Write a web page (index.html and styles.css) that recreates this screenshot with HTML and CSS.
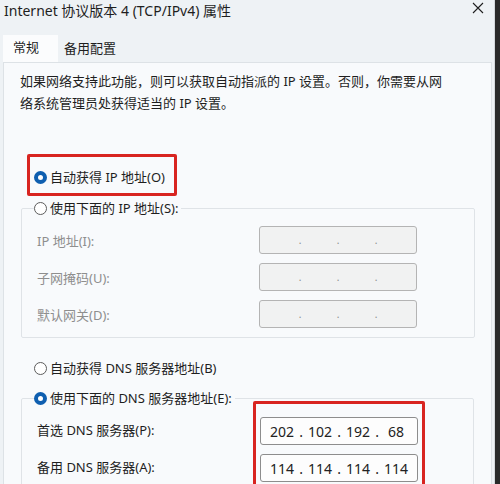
FILE: index.html
```html
<!DOCTYPE html>
<html lang="zh-CN">
<head>
<meta charset="UTF-8">
<title>Internet 协议版本 4 (TCP/IPv4) 属性</title>
<link rel="stylesheet" href="styles.css">
</head>
<body>
    <div class="window">
        <div class="titlebar">
            <span class="title">Internet 协议版本 4 (TCP/IPv4) 属性</span>
            <svg class="close" width="12" height="12" viewBox="0 0 12 12">
                <path d="M1 1 L11 11 M11 1 L1 11" stroke="#1f1f1f" stroke-width="1.1" fill="none"/>
            </svg>
        </div>
        <div class="tabs">
            <div class="tab active">常规</div>
            <div class="tab">备用配置</div>
        </div>
        <div class="panel">
            <p class="desc">如果网络支持此功能，则可以获取自动指派的 IP 设置。否则，你需要从网<br>络系统管理员处获得适当的 IP 设置。</p>

            <!-- 红框标注：自动获得 IP -->
            <div class="mark mark-auto">
                <label class="radio"><span class="knob checked"></span>自动获得 IP 地址(O)</label>
            </div>

            <fieldset class="group group-ip">
                <legend><label class="radio"><span class="knob"></span>使用下面的 IP 地址(S):</label></legend>
                <div class="rows disabled">
                    <span class="lbl">IP 地址(I):</span>
                    <div class="ip"><span class="oct"></span><span class="sep">.</span><span class="oct"></span><span class="sep">.</span><span class="oct"></span><span class="sep">.</span><span class="oct"></span></div>
                    <span class="lbl">子网掩码(U):</span>
                    <div class="ip"><span class="oct"></span><span class="sep">.</span><span class="oct"></span><span class="sep">.</span><span class="oct"></span><span class="sep">.</span><span class="oct"></span></div>
                    <span class="lbl">默认网关(D):</span>
                    <div class="ip"><span class="oct"></span><span class="sep">.</span><span class="oct"></span><span class="sep">.</span><span class="oct"></span><span class="sep">.</span><span class="oct"></span></div>
                </div>
            </fieldset>

            <label class="radio dns-auto"><span class="knob"></span>自动获得 DNS 服务器地址(B)</label>

            <fieldset class="group group-dns">
                <legend><label class="radio"><span class="knob checked"></span>使用下面的 DNS 服务器地址(E):</label></legend>
                <div class="dns">
                    <div class="dns-labels">
                        <span class="lbl">首选 DNS 服务器(P):</span>
                        <span class="lbl">备用 DNS 服务器(A):</span>
                    </div>
                    <!-- 红框标注：DNS 地址 -->
                    <div class="mark mark-dns">
                        <div class="ip filled"><span class="oct">202</span><span class="sep">.</span><span class="oct">102</span><span class="sep">.</span><span class="oct">192</span><span class="sep">.</span><span class="oct">68</span></div>
                        <div class="ip filled"><span class="oct">114</span><span class="sep">.</span><span class="oct">114</span><span class="sep">.</span><span class="oct">114</span><span class="sep">.</span><span class="oct">114</span></div>
                    </div>
                </div>
            </fieldset>
        </div>
    </div>
</body>
</html>
```

FILE: styles.css
```css
/* 页面基础 */
html, body {
    margin: 0;
    padding: 0;
    overflow: hidden;
    height: 484px;
}
body {
    background: #2a2a2a;
    font-family: "Noto Sans", "Noto Sans CJK SC", sans-serif;
    font-size: 13px;
    color: #1e1e1e;
}
/* 窗口 */
.window {
    width: 494px;
    height: 484px;
    overflow: hidden;
    background: #eef2f5;
    border-right: 1px solid #d4d8dc;
}
/* 标题栏 */
.titlebar {
    height: 35px;
    display: flex;
    justify-content: space-between;
    padding: 0 10px 0 4px;
}
.title {
    font-size: 14px;
    line-height: 21px;
}
.close {
    margin-top: 2px;
}
/* 选项卡 */
.tabs {
    display: flex;
    height: 27px;
    padding-left: 3px;
}
.tab {
    line-height: 27px;
    padding-left: 6px;
}
.tab.active {
    width: 45px;
    padding-left: 10px;
    background: #fbfcfd;
    line-height: 25px;
}
/* 内容面板 */
.panel {
    width: 455px;
    height: 414px;
    overflow: hidden;
    margin-left: 3px;
    padding: 7px 16px 0 16px;
    background: #f8fafc;
    border: 1px solid #dde2e6;
    border-bottom: none;
}
.desc {
    margin: 0;
    line-height: 22px;
}
/* 单选按钮 */
.radio {
    display: flex;
    align-items: center;
    gap: 3px;
    line-height: 20px;
    height: 20px;
}
.knob {
    width: 11px;
    height: 11px;
    border: 1px solid #5c5c5c;
    border-radius: 50%;
    background: #fff;
    flex-shrink: 0;
}
.knob.checked {
    width: 5px;
    height: 5px;
    border: 4px solid #0f5fb0;
    background: #fff;
}
/* 红框标注 */
.mark {
    border: 3px solid #d82420;
    border-radius: 2px;
}
.mark-auto {
    width: 140px;
    margin: 40px 0 0 7px;
    padding: 10px 0 6px 4px;
}
/* 分组框 */
.group {
    margin: 2px 0 0 1px;
    padding: 0 0 9px 12px;
    border: 1px solid #dfe3e7;
    border-radius: 2px;
}
.group legend {
    padding: 0 3px 0 0;
}
.rows {
    display: grid;
    grid-template-columns: 222px 158px;
    row-gap: 9px;
    padding: 8px 0 0 3px;
    align-items: center;
}
.disabled .lbl {
    color: #8e8e8e;
}
/* IP 输入框 */
.ip {
    display: flex;
    height: 26px;
    padding: 0 2px;
    border: 1px solid #b4b4b4;
    border-radius: 3px;
    background: #f1f2f2;
    align-items: center;
}
.oct {
    flex: 1;
    text-align: center;
}
.sep {
    width: 0;
    display: flex;
    justify-content: center;
    color: #8a8a8a;
    font-size: 10px;
}
.ip.filled {
    background: #fdfdfd;
    border-color: #8d8d8d;
    font-size: 14px;
    color: #222;
}
.ip.filled .sep {
    font-size: 14px;
    color: #222;
}
/* DNS 区域 */
.dns-auto {
    margin: 20px 0 0 14px;
}
.group-dns {
    margin-top: 10px;
    margin-right: 1px;
    padding-bottom: 20px;
}
.dns {
    display: flex;
    padding-left: 3px;
}
.dns-labels {
    width: 216px;
    display: flex;
    flex-direction: column;
    gap: 9px;
    padding-top: 8px;
}
.dns-labels .lbl {
    line-height: 28px;
}
.mark-dns {
    margin-top: -7px;
    width: 158px;
    padding: 13px 4px 10px 4px;
    display: flex;
    flex-direction: column;
    gap: 9px;
}
```
